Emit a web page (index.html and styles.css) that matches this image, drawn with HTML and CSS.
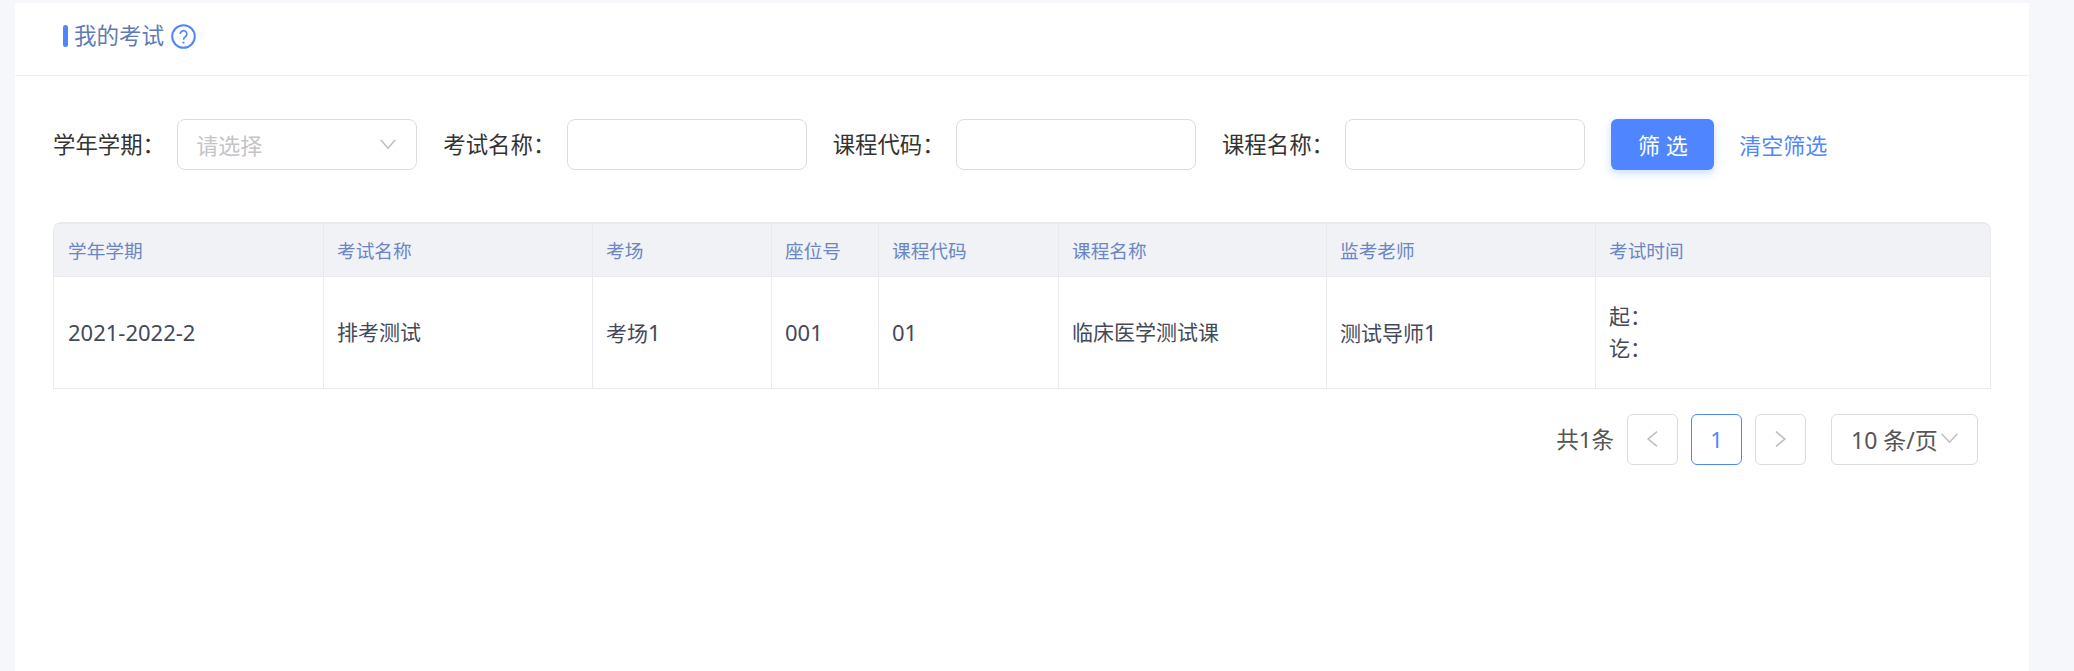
FILE: index.html
```html
<!DOCTYPE html>
<html lang="zh-CN">
<head>
<meta charset="utf-8">
<title>我的考试</title>
<link rel="stylesheet" href="styles.css">
</head>
<body>
<main class="panel">
  <header class="title-bar">
    <span class="title-mark"></span>
    <h1 class="title">我的考试</h1>
    <svg class="help" viewBox="0 0 25 25" width="25" height="25" aria-hidden="true">
      <circle cx="12.5" cy="12.5" r="11.3" fill="none" stroke="#4f86ff" stroke-width="2"/>
      <path d="M9.2 10a3.3 3.3 0 1 1 5.2 2.7c-1.2.8-1.9 1.5-1.9 3" fill="none" stroke="#4f86ff" stroke-width="1.7"/>
      <circle cx="12.5" cy="18.6" r="1.1" fill="#4f86ff"/>
    </svg>
  </header>

  <form class="filters">
    <label class="filter-label">学年学期：</label>
    <div class="control select">
      <span class="placeholder">请选择</span>
      <svg class="chevron" viewBox="0 0 16 10" width="16" height="10" aria-hidden="true"><path d="M.7.7L8 9.3 15.3.7" fill="none" stroke="#c0c0c0" stroke-width="1.5"/></svg>
    </div>
    <label class="filter-label">考试名称：</label>
    <div class="control"></div>
    <label class="filter-label">课程代码：</label>
    <div class="control"></div>
    <label class="filter-label">课程名称：</label>
    <div class="control"></div>
    <button class="btn-primary" type="button">筛 选</button>
    <a class="link-clear">清空筛选</a>
  </form>

  <div class="table-wrap">
    <table class="grid">
      <thead>
        <tr>
          <th class="c1">学年学期</th>
          <th class="c2">考试名称</th>
          <th class="c3">考场</th>
          <th class="c4">座位号</th>
          <th class="c5">课程代码</th>
          <th class="c6">课程名称</th>
          <th class="c7">监考老师</th>
          <th class="c8">考试时间</th>
        </tr>
      </thead>
      <tbody>
        <tr>
          <td><span class="num">2021-2022-2</span></td>
          <td>排考测试</td>
          <td>考场<span class="num">1</span></td>
          <td><span class="num">001</span></td>
          <td><span class="num">01</span></td>
          <td>临床医学测试课</td>
          <td>测试导师<span class="num">1</span></td>
          <td><div class="time-line">起：</div><div class="time-line">讫：</div></td>
        </tr>
      </tbody>
    </table>
  </div>

  <nav class="pager">
    <span class="total">共1条</span>
    <span class="page-btn">
      <svg viewBox="0 0 11 16" width="11" height="16" aria-hidden="true"><path d="M10 .7L1.2 8l8.8 7.3" fill="none" stroke="#bdbdbd" stroke-width="1.6"/></svg>
    </span>
    <span class="page-btn active">1</span>
    <span class="page-btn">
      <svg viewBox="0 0 11 16" width="11" height="16" aria-hidden="true"><path d="M1 .7L9.8 8 1 15.3" fill="none" stroke="#bdbdbd" stroke-width="1.6"/></svg>
    </span>
    <span class="page-size">
      <span>10 条/页</span>
      <svg class="size-chevron" viewBox="0 0 17 10" width="17" height="10" aria-hidden="true"><path d="M.7.7l7.8 8.6L16.3.7" fill="none" stroke="#c0c0c0" stroke-width="1.5"/></svg>
    </span>
  </nav>
</main>
</body>
</html>
```
FILE: styles.css
```css
* { box-sizing: border-box; }
html, body { margin: 0; height: 100%; overflow: hidden; }
body {
  background: #f6f7fa;
  font-family: "Noto Sans", "Noto Sans CJK SC", sans-serif;
  color: #333;
}
.panel {
  margin: 3px 45px 0 15px;
  height: 668px;
  background: #fff;
}
.title-bar {
  height: 73px;
  border-bottom: 1px solid #f0f1f4;
  padding: 0 0 6px 48px;
  display: flex;
  align-items: center;
}
.title-mark {
  width: 5px;
  height: 22px;
  border-radius: 3px;
  background: #4f86ff;
}
.title {
  margin: 0 0 0 6px;
  font-size: 22.5px;
  line-height: 26px;
  font-weight: 400;
  color: #5f7bb5;
}
.help { margin-left: 7px; }
.filters {
  display: flex;
  align-items: center;
  height: 51px;
  margin: 43px 0 0 38px;
}
.filter-label {
  width: 123.33px;
  padding-bottom: 2px;
  font-size: 22.4px;
  color: #333;
  white-space: nowrap;
}
.filter-label:first-child { width: 124.33px; }
.control {
  width: 240px;
  height: 51px;
  margin-right: 26px;
  border: 1px solid #dcdcdc;
  border-radius: 8px;
  background: #fff;
}
.select {
  display: flex;
  align-items: center;
  justify-content: space-between;
  padding: 0 20px 2px 18px;
}
.placeholder { font-size: 22px; color: #c4c4c4; }
.btn-primary {
  width: 103px;
  height: 51px;
  padding: 0 0 2px;
  border: 0;
  border-radius: 6px;
  background: #4f86ff;
  color: #fff;
  font: inherit;
  font-size: 22px;
  box-shadow: 0 3px 9px rgba(79, 134, 255, .3);
}
.link-clear {
  margin-left: 25px;
  padding-bottom: 2px;
  font-size: 22px;
  color: #4f86ff;
}
.table-wrap {
  width: 1938px;
  margin: 52px 0 0 38px;
  border: 1px solid #e8eaee;
  border-top-width: 2px;
  border-radius: 8px 8px 0 0;
  overflow: hidden;
}
.grid {
  width: 100%;
  table-layout: fixed;
  border-collapse: collapse;
}
.grid th {
  height: 52px;
  padding: 0 13.5px;
  background: #f0f2f6;
  border-bottom: 1px solid #e8eaee;
  border-right: 1px solid #e8eaee;
  font-size: 18.67px;
  font-weight: 400;
  text-align: left;
  color: #6b86c2;
}
.grid td {
  height: 112px;
  padding: 0 13.5px;
  border-right: 1px solid #e8eaee;
  font-size: 21px;
  line-height: 32px;
  color: #43495a;
}
.grid .num { font-size: 22px; }
.grid th:first-child, .grid td:first-child { padding-left: 14px; }
.grid th:last-child, .grid td:last-child { border-right: 0; }
.c1 { width: 269px; }
.c2 { width: 269px; }
.c3 { width: 179px; }
.c4 { width: 107px; }
.c5 { width: 180px; }
.c6 { width: 268px; }
.c7 { width: 269px; }
.pager {
  display: flex;
  align-items: center;
  justify-content: flex-end;
  height: 51px;
  margin: 25px 51px 0 0;
}
.total {
  margin-right: 13px;
  padding-bottom: 2px;
  font-size: 22.5px;
  color: #555;
}
.page-btn {
  width: 51px;
  height: 51px;
  margin-right: 13px;
  display: flex;
  align-items: center;
  justify-content: center;
  padding-bottom: 1px;
  border: 1px solid #dcdcdc;
  border-radius: 6px;
  font-size: 22px;
}
.page-btn.active { border-color: #4f86ff; color: #4f86ff; }
.page-size {
  width: 147px;
  height: 51px;
  margin-left: 12px;
  display: flex;
  align-items: center;
  padding: 0 0 2px 19px;
  gap: 3px;
  border: 1px solid #dcdcdc;
  border-radius: 6px;
  font-size: 23px;
  color: #555;
  white-space: nowrap;
}
.size-chevron { margin-top: -2px; }
```
